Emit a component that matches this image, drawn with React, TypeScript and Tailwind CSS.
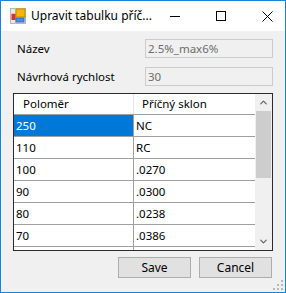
import { ChevronUp, ChevronDown } from "lucide-react"

type row = { radius: string; slope: string }

const rows: row[] = [
    { radius: '250', slope: 'NC' },
    { radius: '110', slope: 'RC' },
    { radius: '100', slope: '.0270' },
    { radius: '90', slope: '.0300' },
    { radius: '80', slope: '.0238' },
    { radius: '70', slope: '.0386' },
    { radius: '', slope: '' },
]

const AppIcon = () => (
    <svg width="16" height="16" viewBox="0 0 16 16">
        <rect x="0.5" y="0.5" width="15" height="15" fill="#e8e8e8" stroke="#b5b5b5" />
        <path d="M0 5.5H16M0 10.5H16M5.5 0V16M10.5 0V16" stroke="#c8c8c8" />
        <rect x="6" y="1" width="9" height="8" fill="#f5b800" stroke="#c98a00" />
        <rect x="1.5" y="6" width="4" height="6" fill="#d8322b" />
        <rect x="6" y="10" width="8" height="4" fill="#4a8fe0" stroke="#2e6fc0" />
    </svg>
)

const Field = ({ label, value }: { label: string; value: string }) => (
    <div className="flex items-center h-[19px]">
        <div className="w-[144px] pl-[16px] text-black whitespace-nowrap">{label}</div>
        <div className="w-[128px] h-[19px] border border-[#cccccc] bg-[#f0f0f0] text-[#6d6d6d] pl-[2px] flex items-center whitespace-nowrap">
            {value}
        </div>
    </div>
)

const App = () => {
    return (
        <div
            className="w-[286px] h-[293px] border border-[#1883d7] bg-[#f0f0f0] relative overflow-hidden text-[11.5px] leading-none"
            style={{ fontFamily: '"Noto Sans", "Open Sans", sans-serif' }}
        >
            {/* title bar */}
            <div className="h-[30px] bg-white flex items-center">
                <div className="ml-[9px] mt-[-1px] shrink-0">
                    <AppIcon />
                </div>
                <div className="ml-[5px] text-black text-[12px] whitespace-nowrap">Upravit tabulku příč...</div>
                <div className="ml-auto flex h-full shrink-0">
                    <div className="w-[46px] flex items-center justify-center">
                        <div className="w-[10px] h-px bg-black" />
                    </div>
                    <div className="w-[46px] flex items-center justify-center">
                        <div className="w-[10px] h-[10px] border border-black" />
                    </div>
                    <div className="w-[46px] flex items-center justify-center">
                        <svg width="11" height="11" viewBox="0 0 11 11">
                            <path d="M0.5 0.5L10.5 10.5M10.5 0.5L0.5 10.5" stroke="#000" strokeWidth="1" />
                        </svg>
                    </div>
                </div>
            </div>

            <div className="flex flex-col pt-[8px]">
                <Field label="Název" value="2.5%_max6%" />
                <div className="h-[9px]" />
                <Field label="Návrhová rychlost" value="30" />

                {/* grid */}
                <div className="ml-[12px] mt-[7px] w-[260px] h-[158px] border border-[#2b2b2b] bg-white flex overflow-hidden">
                    <div className="w-[241px] flex flex-col">
                        <div className="flex h-[21px] border-b border-[#a0a0a0] shrink-0">
                            <div className="w-[120px] pl-[9px] flex items-center border-r border-[#e5e5e5]">Poloměr</div>
                            <div className="w-[121px] pl-[8px] flex items-center">Příčný sklon</div>
                        </div>
                        {rows.map((r, i) => (
                            <div key={i} className="flex h-[22px] border-b border-[#a0a0a0] shrink-0">
                                <div
                                    className={
                                        i === 0
                                            ? 'w-[120px] pl-[2px] flex items-center bg-[#0078d7] text-white border-r border-[#a0a0a0]'
                                            : 'w-[120px] pl-[2px] flex items-center text-black border-r border-[#a0a0a0]'
                                    }
                                >
                                    {r.radius}
                                </div>
                                <div className="w-[121px] pl-[2px] flex items-center text-black">{r.slope}</div>
                            </div>
                        ))}
                    </div>
                    {/* scrollbar */}
                    <div className="w-[17px] bg-[#f0f0f0] flex flex-col">
                        <div className="h-[17px] flex items-center justify-center text-[#606060]">
                            <ChevronUp size={11} strokeWidth={2.5} />
                        </div>
                        <div className="h-[67px] mx-px bg-[#cdcdcd]" />
                        <div className="flex-1" />
                        <div className="h-[17px] flex items-center justify-center text-[#606060]">
                            <ChevronDown size={11} strokeWidth={2.5} />
                        </div>
                    </div>
                </div>

                {/* buttons */}
                <div className="flex gap-[8px] mt-[6px] ml-[117px]">
                    <button className="w-[73px] h-[21px] border border-[#adadad] bg-[#e1e1e1] text-black text-[12px] leading-none flex items-center justify-center">Save</button>
                    <button className="w-[73px] h-[21px] border border-[#adadad] bg-[#e1e1e1] text-black text-[12px] leading-none flex items-center justify-center">Cancel</button>
                </div>
            </div>

            {/* resize grip */}
            <svg className="absolute right-[2px] bottom-[2px]" width="10" height="10" viewBox="0 0 10 10">
                <rect x="8" y="0" width="2" height="2" fill="#b8b8b8" />
                <rect x="4" y="4" width="2" height="2" fill="#b8b8b8" />
                <rect x="8" y="4" width="2" height="2" fill="#b8b8b8" />
                <rect x="0" y="8" width="2" height="2" fill="#b8b8b8" />
                <rect x="4" y="8" width="2" height="2" fill="#b8b8b8" />
                <rect x="8" y="8" width="2" height="2" fill="#b8b8b8" />
            </svg>
        </div>
    )
}

export default App
